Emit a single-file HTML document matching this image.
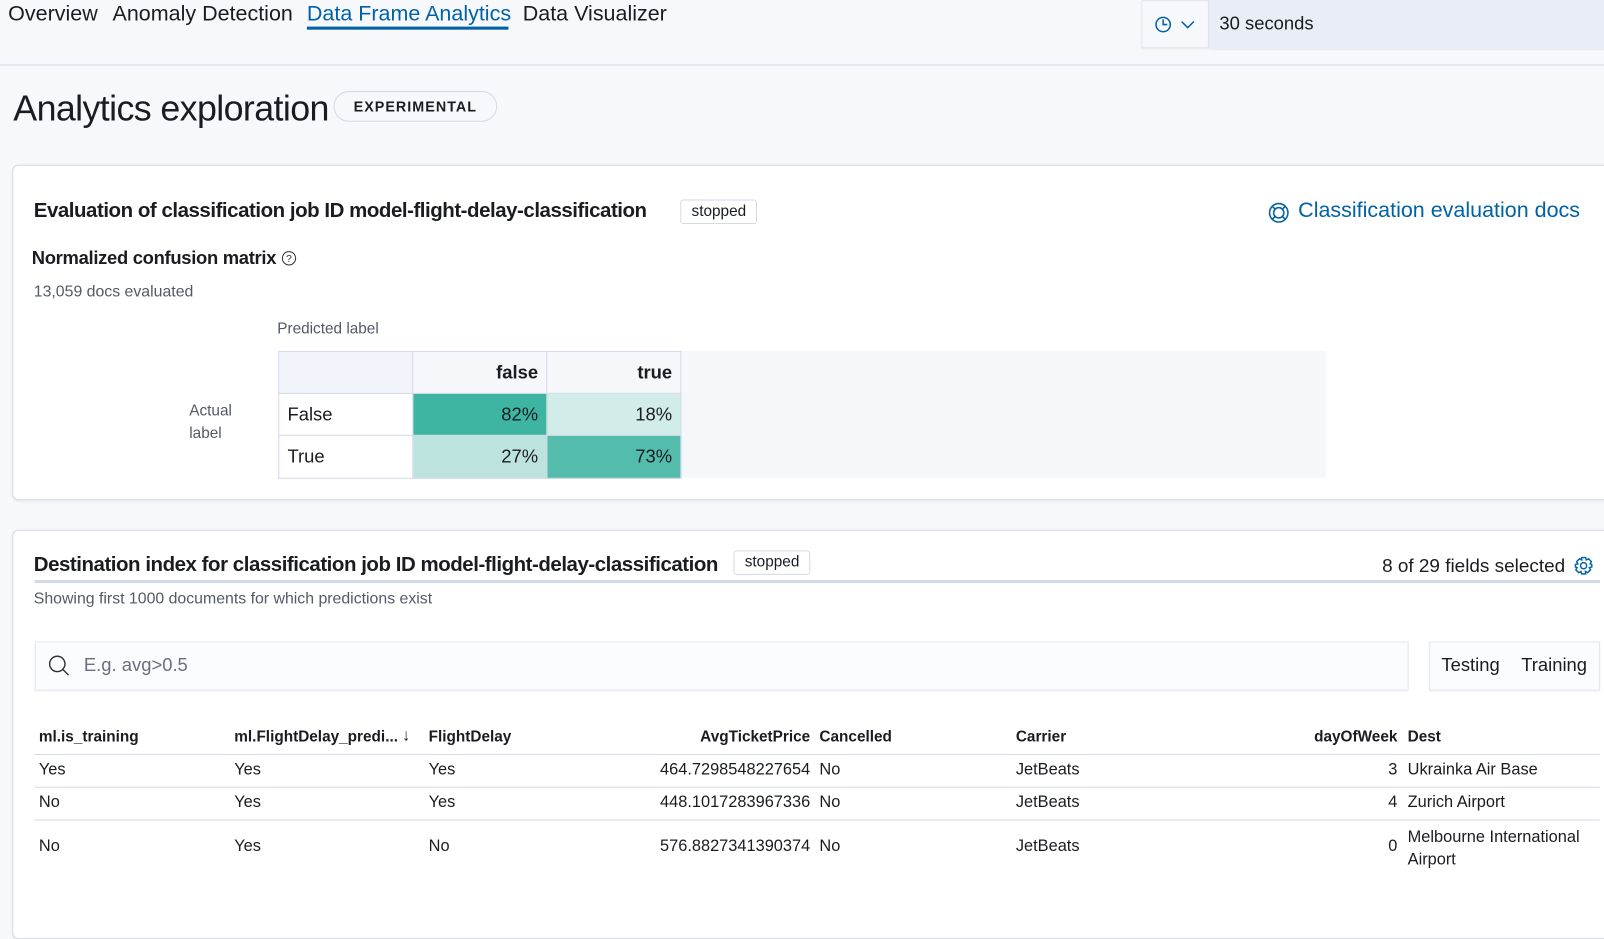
<!DOCTYPE html>
<html><head><style>
*{margin:0;padding:0;box-sizing:border-box}
body{width:1604px;height:869px;overflow:hidden;background:#f7f8fc;font-family:"Liberation Sans",sans-serif;color:#1a1c21;position:relative}
#w{position:absolute;left:0;top:0;width:1568px;height:850px;transform:scale(1.023);transform-origin:0 0}
.a{position:absolute;white-space:nowrap}
.tab{font-size:21px;top:2px}
.panel{position:absolute;background:#fff;border:1px solid #d3dae6;border-radius:6px;box-shadow:0 1px 3px rgba(0,0,0,.06)}
.badge{position:absolute;border:1px solid #d3dae6;border-radius:3px;font-size:15px;padding:0 10px;height:24px;line-height:22px;background:#fff}
td{border:1px solid #d3dae6;font-size:18px;padding:0 8px}
.th{font-size:15px;font-weight:bold;top:712px}
.td{font-size:16px}
.hl{position:absolute;left:34px;width:1530px;height:1px;background:#d3dae6}
</style></head><body><div id="w">
<div class="a tab" style="left:8px">Overview</div>
<div class="a tab" style="left:110px">Anomaly Detection</div>
<div class="a tab" style="left:300px;color:#0061a6">Data Frame Analytics</div>
<div style="position:absolute;left:300px;top:26px;width:197px;height:3px;background:#0061a6"></div>
<div class="a tab" style="left:511px">Data Visualizer</div>
<div style="position:absolute;left:1116px;top:0;width:66px;height:47px;background:#f7f8fc;border:1px solid #e3e8f0;box-shadow:0 1px 2px rgba(0,0,0,.1)"></div>
<svg class="a" style="left:1128px;top:15px" width="40" height="18" viewBox="0 0 40 18"><circle cx="9" cy="9" r="7" fill="none" stroke="#0061a6" stroke-width="1.5"/><path d="M9 4v5h4" fill="none" stroke="#0061a6" stroke-width="1.5"/><path d="M27 6l6 6 6-6" fill="none" stroke="#0061a6" stroke-width="1.5"/></svg>
<div style="position:absolute;left:1182px;top:0;width:422px;height:48px;background:#e9edf5;box-shadow:0 1px 2px rgba(0,0,0,.1)"></div>
<div class="a" style="left:1192px;top:13px;font-size:18px">30 seconds</div>
<div style="position:absolute;left:0;top:63px;width:1604px;height:1px;background:#d3dae6"></div>
<div class="a" style="left:13px;top:87px;font-size:35px;letter-spacing:-0.6px">Analytics exploration</div>
<div class="a" style="left:326px;top:89px;width:160px;height:30px;border:1px solid #d3dae6;border-radius:15px;font-size:14px;font-weight:bold;text-align:center;line-height:28px;letter-spacing:1px">EXPERIMENTAL</div>

<div class="panel" style="left:12px;top:161px;width:1600px;height:328px"></div>
<div class="a" style="left:33px;top:195px;font-size:20px;font-weight:bold;letter-spacing:-0.45px">Evaluation of classification job ID model-flight-delay-classification</div>
<div class="badge" style="left:665px;top:195px">stopped</div>
<svg class="a" style="left:1239px;top:197px" width="22" height="22" viewBox="0 0 22 22"><g fill="none" stroke="#0061a6" stroke-width="1.5"><circle cx="11" cy="11" r="9"/><circle cx="11" cy="11" r="5"/><path d="M5 5l3 3M17 5l-3 3M5 17l3-3M17 17l-3-3"/></g></svg>
<div class="a" style="left:1269px;top:194px;font-size:21px;color:#0061a6">Classification evaluation docs</div>
<div class="a" style="left:31px;top:242px;font-size:18px;font-weight:bold;letter-spacing:-0.3px">Normalized confusion matrix</div>
<svg class="a" style="left:275px;top:245px" width="15" height="15" viewBox="0 0 15 15"><circle cx="7.5" cy="7.5" r="6.5" fill="none" stroke="#333" stroke-width="1"/><text x="7.5" y="11" font-size="10" text-anchor="middle" fill="#333" font-family="Liberation Sans">?</text></svg>
<div class="a" style="left:33px;top:277px;font-size:15.5px;color:#535966">13,059 docs evaluated</div>
<div class="a" style="left:271px;top:313px;font-size:15px;color:#535966">Predicted label</div>
<div style="position:absolute;left:664px;top:343px;width:632px;height:124px;background:#f5f7fa"></div>
<div class="a" style="left:185px;top:391px;font-size:15px;color:#535966;line-height:22px">Actual<br>label</div>
<table style="position:absolute;left:272px;top:343px;border-collapse:collapse">
<tr style="height:41px"><td style="width:131px;background:#f1f4fa"></td><td style="width:131px;text-align:right;font-weight:bold;background:#f5f7fa">false</td><td style="width:131px;text-align:right;font-weight:bold;background:#f5f7fa">true</td></tr>
<tr style="height:41px"><td>False</td><td style="background:#3eb5a3;text-align:right">82%</td><td style="background:#d2ece9;text-align:right">18%</td></tr>
<tr style="height:42px"><td>True</td><td style="background:#bce3de;text-align:right">27%</td><td style="background:#54bcad;text-align:right">73%</td></tr>
</table>

<div class="panel" style="left:12px;top:518px;width:1600px;height:400px"></div>
<div class="a" style="left:33px;top:541px;font-size:20px;font-weight:bold;letter-spacing:-0.45px">Destination index for classification job ID model-flight-delay-classification</div>
<div class="badge" style="left:717px;top:538px">stopped</div>
<div class="a" style="left:1351px;top:542px;font-size:18.5px">8 of 29 fields selected</div>
<svg class="a" style="left:1538px;top:543px" width="20" height="20" viewBox="0 0 20 20"><g fill="none" stroke="#0061a6" stroke-width="1.4"><path d="M8 2h4l.6 2.4 2.2-1.2 2.8 2.8-1.2 2.2L18 8.8v2.4l-2.4.6 1.2 2.2-2.8 2.8-2.2-1.2L12 18H8l-.6-2.4-2.2 1.2-2.8-2.8 1.2-2.2L2 11.2V8.8l2.4-.6-1.2-2.2 2.8-2.8 2.2 1.2z"/><circle cx="10" cy="10" r="3"/></g></svg>
<div style="position:absolute;left:34px;top:567px;width:1530px;height:3px;background:#d3dae6"></div>
<div class="a" style="left:33px;top:577px;font-size:15.5px;color:#535966">Showing first 1000 documents for which predictions exist</div>
<div style="position:absolute;left:34px;top:627px;width:1343px;height:48px;background:#fbfcfd;border:1px solid #e3e8f0;box-shadow:0 1px 2px rgba(0,0,0,.08)"></div>
<svg class="a" style="left:47px;top:640px" width="22" height="22" viewBox="0 0 22 22"><circle cx="9" cy="9" r="7.5" fill="none" stroke="#333" stroke-width="1.4"/><path d="M14.5 14.5L20 20" stroke="#333" stroke-width="1.4"/></svg>
<div class="a" style="left:82px;top:640px;font-size:18px;color:#69707d">E.g. avg&gt;0.5</div>
<div style="position:absolute;left:1397px;top:627px;width:167px;height:48px;background:#fbfcfd;border:1px solid #e3e8f0;box-shadow:0 1px 2px rgba(0,0,0,.08)"></div>
<div class="a" style="left:1409px;top:640px;font-size:18px">Testing</div>
<div class="a" style="left:1487px;top:640px;font-size:18px">Training</div>

<div class="a th" style="left:38px">ml.is_training</div>
<div class="a th" style="left:229px">ml.FlightDelay_predi...</div>
<div class="a" style="left:393px;top:711px;font-size:16px">↓</div>
<div class="a th" style="left:419px">FlightDelay</div>
<div class="a th" style="right:776px">AvgTicketPrice</div>
<div class="a th" style="left:801px">Cancelled</div>
<div class="a th" style="left:993px">Carrier</div>
<div class="a th" style="right:202px">dayOfWeek</div>
<div class="a th" style="left:1376px">Dest</div>
<div class="hl" style="top:737px"></div>
<div class="hl" style="top:769px"></div>
<div class="hl" style="top:801px"></div>

<div class="a td" style="left:38px;top:744px">Yes</div><div class="a td" style="left:229px;top:744px">Yes</div><div class="a td" style="left:419px;top:744px">Yes</div><div class="a td" style="right:776px;top:744px">464.7298548227654</div><div class="a td" style="left:801px;top:744px">No</div><div class="a td" style="left:993px;top:744px">JetBeats</div><div class="a td" style="right:202px;top:744px">3</div><div class="a td" style="left:1376px;top:744px">Ukrainka Air Base</div>
<div class="a td" style="left:38px;top:776px">No</div><div class="a td" style="left:229px;top:776px">Yes</div><div class="a td" style="left:419px;top:776px">Yes</div><div class="a td" style="right:776px;top:776px">448.1017283967336</div><div class="a td" style="left:801px;top:776px">No</div><div class="a td" style="left:993px;top:776px">JetBeats</div><div class="a td" style="right:202px;top:776px">4</div><div class="a td" style="left:1376px;top:776px">Zurich Airport</div>
<div class="a td" style="left:38px;top:819px">No</div><div class="a td" style="left:229px;top:819px">Yes</div><div class="a td" style="left:419px;top:819px">No</div><div class="a td" style="right:776px;top:819px">576.8827341390374</div><div class="a td" style="left:801px;top:819px">No</div><div class="a td" style="left:993px;top:819px">JetBeats</div><div class="a td" style="right:202px;top:819px">0</div><div class="a td" style="left:1376px;top:808px;line-height:22px">Melbourne International<br>Airport</div>
</div></body></html>
